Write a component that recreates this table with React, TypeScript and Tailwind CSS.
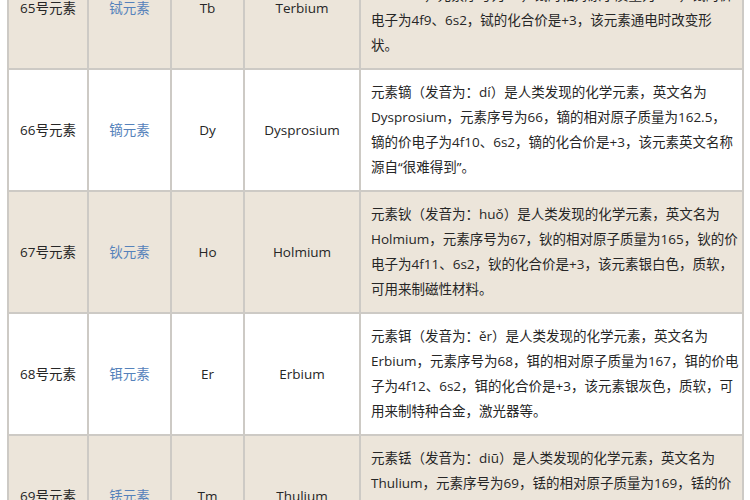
interface Element {
    no: string
    name: string
    sym: string
    en: string
    lines: string[]
}

const elements: Element[] = [
    {
        no: '65号元素',
        name: '铽元素',
        sym: 'Tb',
        en: 'Terbium',
        lines: [
            '元素铽（发音为：tè）是人类发现的化学元素，英文名为',
            'Terbium，元素序号为65，铽的相对原子质量为159，铽的价',
            '电子为4f9、6s2，铽的化合价是+3，该元素通电时改变形',
            '状。',
        ],
    },
    {
        no: '66号元素',
        name: '镝元素',
        sym: 'Dy',
        en: 'Dysprosium',
        lines: [
            '元素镝（发音为：dí）是人类发现的化学元素，英文名为',
            'Dysprosium，元素序号为66，镝的相对原子质量为162.5，',
            '镝的价电子为4f10、6s2，镝的化合价是+3，该元素英文名称',
            '源自“很难得到”。',
        ],
    },
    {
        no: '67号元素',
        name: '钬元素',
        sym: 'Ho',
        en: 'Holmium',
        lines: [
            '元素钬（发音为：huǒ）是人类发现的化学元素，英文名为',
            'Holmium，元素序号为67，钬的相对原子质量为165，钬的价',
            '电子为4f11、6s2，钬的化合价是+3，该元素银白色，质软，',
            '可用来制磁性材料。',
        ],
    },
    {
        no: '68号元素',
        name: '铒元素',
        sym: 'Er',
        en: 'Erbium',
        lines: [
            '元素铒（发音为：ěr）是人类发现的化学元素，英文名为',
            'Erbium，元素序号为68，铒的相对原子质量为167，铒的价电',
            '子为4f12、6s2，铒的化合价是+3，该元素银灰色，质软，可',
            '用来制特种合金，激光器等。',
        ],
    },
    {
        no: '69号元素',
        name: '铥元素',
        sym: 'Tm',
        en: 'Thulium',
        lines: [
            '元素铥（发音为：diū）是人类发现的化学元素，英文名为',
            'Thulium，元素序号为69，铥的相对原子质量为169，铥的价',
            '电子为4f13、6s2，铥的化合价是+3，该元素银白色，质软，',
            '可用来制作X射线源。',
        ],
    },
]

export default function App() {
    return (
        <div
            className="h-[500px] w-[750px] overflow-hidden bg-white text-[13.5px] text-[#262626]"
            style={{ fontFamily: '"Open Sans", "Noto Sans CJK SC", sans-serif' }}
        >
            <table className="-mt-[54px] ml-[7px] w-[737px] table-fixed border-collapse">
                <colgroup>
                    <col className="w-[80px]" />
                    <col className="w-[83px]" />
                    <col className="w-[73px]" />
                    <col className="w-[116px]" />
                    <col />
                </colgroup>
                <tbody>
                    {elements.map((el, i) => (
                        <ElementRow key={el.sym} el={el} shaded={i % 2 === 0} />
                    ))}
                </tbody>
            </table>
        </div>
    )
}

function ElementRow({ el, shaded }: { el: Element; shaded: boolean }) {
    const cell = 'border-2 border-[#cdcac5] text-center align-middle'
    return (
        <tr className={shaded ? 'bg-[#ece5da]' : 'bg-white'}>
            <td className={cell}>{el.no}</td>
            <td className={`${cell} text-[#5582bb]`}>{el.name}</td>
            <td className={cell}>{el.sym}</td>
            <td className={cell}>{el.en}</td>
            <td className="border-2 border-[#cdcac5] px-[10px] py-[10px] align-middle leading-[25px]">
                {el.lines.map((line) => (
                    <div key={line} className="whitespace-nowrap">
                        {line}
                    </div>
                ))}
            </td>
        </tr>
    )
}
